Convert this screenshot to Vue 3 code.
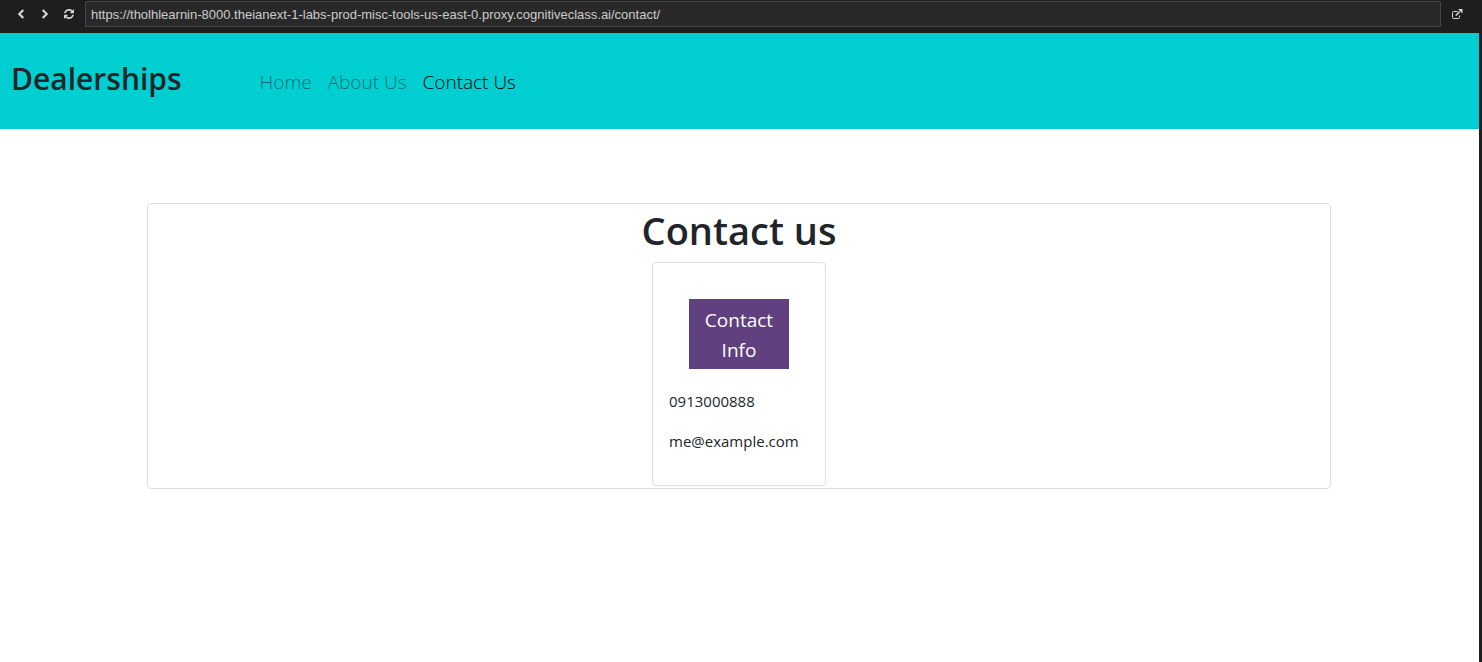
<script setup>
import { ref } from 'vue'

const address = ref('https://tholhlearnin-8000.theianext-1-labs-prod-misc-tools-us-east-0.proxy.cognitiveclass.ai/contact/')
const links = [
  { label: 'Home', href: '#home' },
  { label: 'About Us', href: '#about' },
  { label: 'Contact Us', href: '#contact', active: true },
]
</script>

<template>
  <div class="browser">
    <header class="toolbar">
      <button class="tool" type="button" aria-label="Back">
        <svg width="8" height="10" viewBox="0 0 8 10"><path d="M6.3 1 2.3 5l4 4" fill="none" stroke="currentColor" stroke-width="2.2" /></svg>
      </button>
      <button class="tool" type="button" aria-label="Forward">
        <svg width="8" height="10" viewBox="0 0 8 10"><path d="m1.7 1 4 4-4 4" fill="none" stroke="currentColor" stroke-width="2.2" /></svg>
      </button>
      <button class="tool" type="button" aria-label="Reload">
        <svg width="10" height="10" viewBox="0 0 1536 1536"><path fill="currentColor" d="M1511 928q0 5-1 7-64 268-268 434.500T764 1536q-146 0-282.500-55T238 1324l-129 129q-19 19-45 19t-45-19-19-45V960q0-26 19-45t45-19h448q26 0 45 19t19 45-19 45l-137 137q71 66 161 102t187 36q134 0 250-65t186-179q11-17 53-117 8-23 30-23h192q13 0 22.500 9.500t9.500 22.500zM1536 128v448q0 26-19 45t-45 19h-448q-26 0-45-19t-19-45 19-45l138-138Q969 256 768 256q-134 0-250 65T332 500q-11 17-53 117-8 23-30 23H50q-13 0-22.500-9.500T18 608v-7q65-268 270-434.500T768 0q146 0 284 55.500T1297 212l130-129q19-19 45-19t45 19 19 45z" /></svg>
      </button>
      <input v-model="address" class="address" type="text" aria-label="Address" spellcheck="false">
      <button class="tool external" type="button" aria-label="Open in new window">
        <svg width="12" height="11" viewBox="0 0 12 11"><path d="M6.500 2.500h-4q-1 0-1 1v5q0 1 1 1h5q1 0 1-1V6.500" fill="none" stroke="currentColor" /><path d="m4.800 6.500 4-4" fill="none" stroke="currentColor" stroke-width="1.700" /><path d="M7 0h4.500v4.500z" fill="currentColor" /></svg>
      </button>
    </header>
    <div class="page">
      <nav class="navbar">
        <h2 class="brand">Dealerships</h2>
        <ul class="links">
          <li v-for="link in links" :key="link.label">
            <a :href="link.href" :class="{ active: link.active }">{{ link.label }}</a>
          </li>
        </ul>
      </nav>
      <main class="panel">
        <h1 class="title">Contact us</h1>
        <section class="card">
          <h2 class="banner">Contact Info</h2>
          <p>0913000888</p>
          <p>me@example.com</p>
        </section>
      </main>
    </div>
  </div>
</template>

<style>
body {
  margin: 0;
}
</style>

<style scoped>
.browser {
  display: flex;
  flex-direction: column;
  min-height: 100vh;
  background: #1e1e1e;
  color: #212529;
  font-family: "Open Sans", "Noto Sans", sans-serif;
  font-size: 15px;
  line-height: 24px;
}

.toolbar {
  display: flex;
  align-items: flex-start;
  box-sizing: border-box;
  height: 33px;
  padding: 1px 13px 0 9px;
}

.tool {
  display: flex;
  align-items: center;
  justify-content: center;
  width: 24px;
  height: 26px;
  padding: 0;
  border: 0;
  background: none;
  color: #d4d4d4;
}

.address {
  flex: 1;
  box-sizing: border-box;
  min-width: 0;
  height: 26px;
  margin-left: 4px;
  padding: 0 5px;
  border: 1px solid #454545;
  border-radius: 1px;
  outline: 0;
  background: #292929;
  color: #cccccc;
  font-family: "Liberation Sans", Arial, sans-serif;
  font-size: 13px;
}

.external {
  margin-left: 4px;
}

.page {
  flex: 1;
  margin-right: 3px;
  background: #ffffff;
}

.navbar {
  display: flex;
  align-items: center;
  gap: 70px;
  box-sizing: border-box;
  min-height: 96px;
  padding: 0 11px;
  background: #00ced1;
}

.brand {
  margin: 0;
  padding-bottom: 4px;
  font-size: 30px;
  font-weight: 600;
  line-height: 40px;
}

.links {
  display: flex;
  margin: 0;
  padding: 2px 0 0;
  list-style: none;
}

.links a {
  padding: 8px;
  color: rgba(0, 0, 0, 0.5);
  font-size: 19px;
  font-weight: 300;
  text-decoration: none;
}

.links a.active {
  color: #000000;
}

.panel {
  margin: 74px 10% 0 calc(10% - 1px);
  padding: 2px;
  border: 1px solid #dfdfdf;
  border-radius: 4px;
}

.title {
  margin: 0 0 8px;
  font-size: 38px;
  font-weight: 600;
  line-height: 48px;
  text-align: center;
}

.card {
  box-sizing: border-box;
  width: 174px;
  margin: 0 auto;
  padding: 36px 16px 16px;
  border: 1px solid #dfdfdf;
  border-radius: 4px;
}

.banner {
  margin: 0 20px 20px;
  padding: 6px 5px 4px;
  background: #60407f;
  color: #ffffff;
  font-size: 19px;
  font-weight: 400;
  line-height: 30px;
  text-align: center;
}

.card p {
  margin: 0 0 16px;
}
</style>
